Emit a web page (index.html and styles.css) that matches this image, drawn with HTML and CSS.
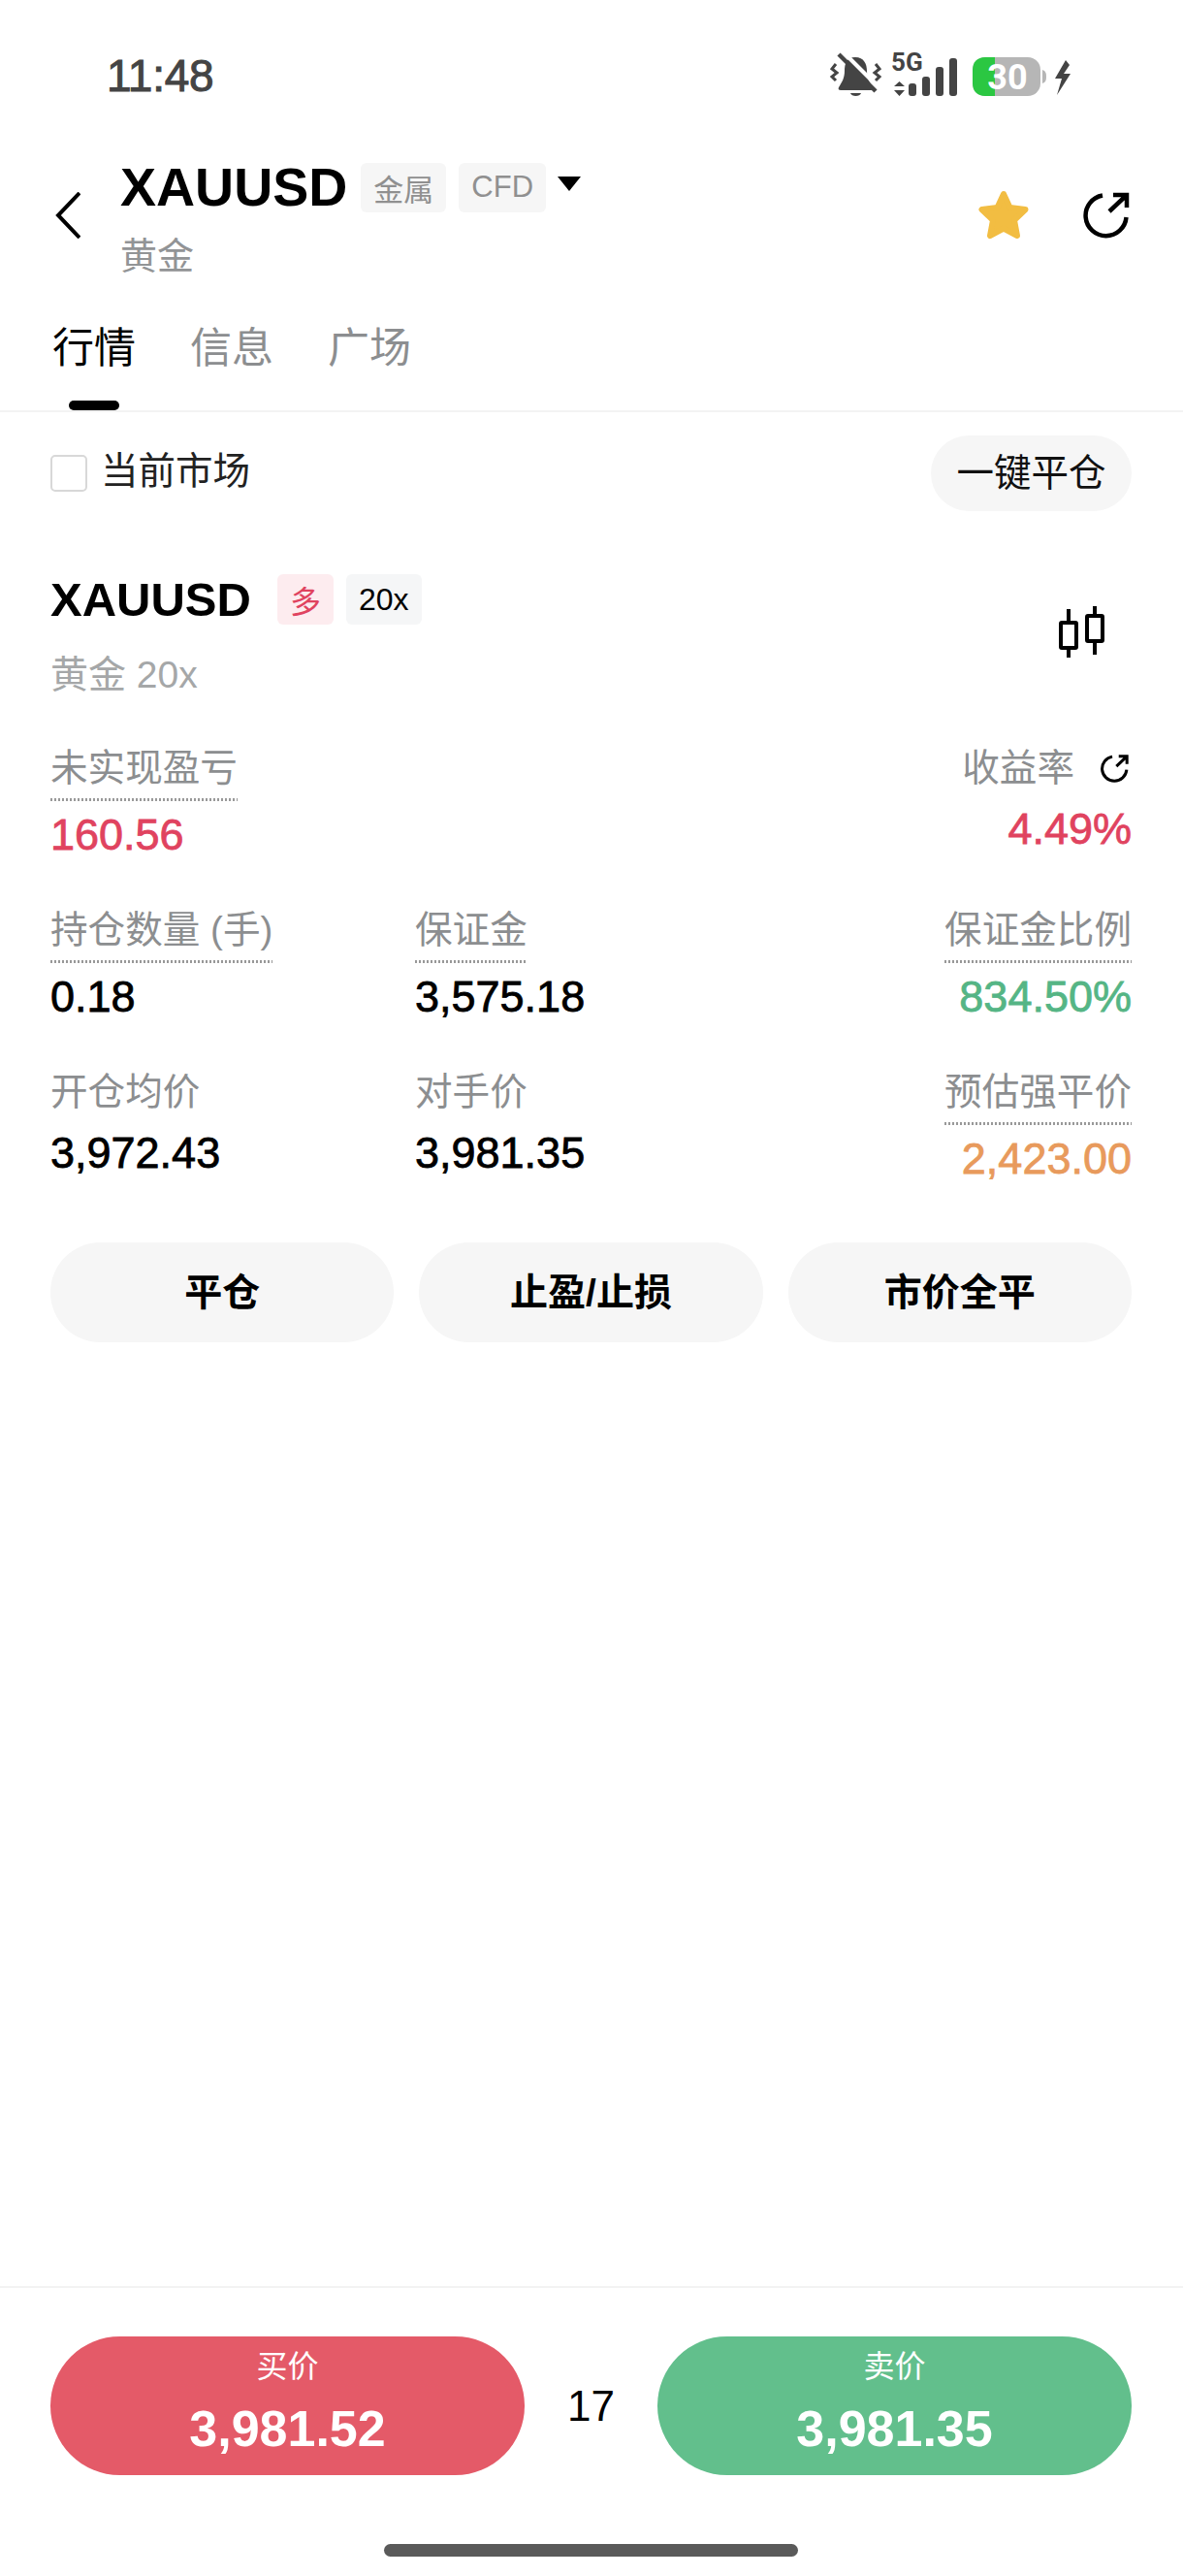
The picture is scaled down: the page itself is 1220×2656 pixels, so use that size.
FILE: index.html

```html
<!DOCTYPE html>
<html lang="zh">
<head>
  <meta charset="UTF-8">
  <title>XAUUSD</title>
  <link rel="stylesheet" href="styles.css">
</head>
<body>

<div class="status-bar">
  <span class="time">11:48</span>
  <svg class="status-icons" width="248" height="46" viewBox="0 0 248 46">
    <path d="M25 4C16 4 14 11 14 18C14 26 11 30 8 35C7 37 8 38 10 38H41C43 38 44 37 43 35C40 30 37 26 37 18C37 11 34 4 25 4Z" fill="#444"/>
    <path d="M20 41H31C30 45 21 45 20 41Z" fill="#444"/>
    <path d="M13 -1L50 36" stroke="#fff" stroke-width="4" fill="none"/>
    <path d="M8 1L46 39" stroke="#444" stroke-width="4.5" fill="none"/>
    <path d="M5 11L1 16L6 20L1 24L5 28" stroke="#444" stroke-width="3" fill="none"/>
    <path d="M46 11L50 16L45 20L50 24L46 28" stroke="#444" stroke-width="3" fill="none"/>
    <text x="62" y="18" class="icon-5g">5G</text>
    <path d="M70.500 29L76 34H65ZM70.500 44L65 38H76Z" fill="#444"/>
    <rect x="80" y="31" width="8" height="13" rx="3" fill="#444"/>
    <rect x="94" y="24" width="8" height="20" rx="3" fill="#444"/>
    <rect x="108" y="14" width="8" height="30" rx="3" fill="#444"/>
    <rect x="122" y="5" width="8" height="39" rx="3" fill="#444"/>
    <rect x="146" y="4" width="70" height="40" rx="13" fill="#b6b6b6"/>
    <path d="M159 4H169V44H159C151 44 146 39 146 31V17C146 9 151 4 159 4Z" fill="#2bc742"/>
    <path d="M218 17C221 18 222 20 222 24C222 28 221 30 218 31Z" fill="#b6b6b6"/>
    <text x="182" y="37" class="icon-batt">30</text>
    <path d="M242 7L231 26H238L233 43L247 21H240L246 12Z" fill="#444"/>
  </svg>
</div>

<div class="header">
  <svg class="back" width="26" height="48" viewBox="0 0 26 48">
    <path d="M25 1L3 24L25 47" fill="none" stroke="#000" stroke-width="4"/>
  </svg>
  <div class="title-col">
    <div class="title-row">
      <span class="title">XAUUSD</span>
      <span class="tag">金属</span>
      <span class="tag">CFD</span>
      <span class="caret"></span>
    </div>
    <div class="subtitle">黄金</div>
  </div>
  <svg class="star" width="54" height="51" viewBox="0 0 54 51">
    <path d="M27 4L33.500 18L49.500 20L38 31L41 47L27 39.500L13 47L16 31L4.500 20L20.500 18Z" fill="#f2bd42" stroke="#f2bd42" stroke-width="6" stroke-linejoin="round"/>
  </svg>
  <svg class="share" width="48" height="48" viewBox="0 0 48 48">
    <path d="M20 3.500A21 21 0 1 0 44.500 26" fill="none" stroke="#000" stroke-width="4.500"/>
    <path d="M27 20L44 4M31 3H45V16" fill="none" stroke="#000" stroke-width="4.500"/>
  </svg>
</div>

<div class="tabs">
  <div class="tab active">行情</div>
  <div class="tab">信息</div>
  <div class="tab">广场</div>
</div>

<div class="main">
  <div class="toolbar">
    <label class="check"><span class="box"></span><span class="check-text">当前市场</span></label>
    <div class="close-all">一键平仓</div>
  </div>

  <div class="pos-head">
    <div>
      <div class="pos-title">
        <span class="pos-name">XAUUSD</span>
        <span class="pos-tag long">多</span>
        <span class="pos-tag">20x</span>
      </div>
      <div class="pos-sub">黄金 20x</div>
    </div>
    <svg class="candle" width="48" height="53" viewBox="0 0 48 53">
      <path d="M10 3V17M10 43V53M37 0V10M37 36V50" stroke="#000" stroke-width="4" fill="none"/>
      <rect x="2" y="17" width="16" height="26" rx="1" fill="none" stroke="#000" stroke-width="4"/>
      <rect x="29" y="10" width="16" height="26" rx="1" fill="none" stroke="#000" stroke-width="4"/>
    </svg>
  </div>

  <div class="metrics">
    <div class="cell">
      <span class="label dotted">未实现盈亏</span>
      <span class="value red">160.56</span>
    </div>
    <div class="cell"></div>
    <div class="cell right">
      <span class="label">收益率<svg class="share-small" width="29" height="29" viewBox="0 0 48 48">
          <path d="M20 3.500A21 21 0 1 0 44.500 26" fill="none" stroke="#000" stroke-width="5"/>
          <path d="M27 20L44 4M31 3H45V16" fill="none" stroke="#000" stroke-width="5"/>
        </svg></span>
      <span class="value red">4.49%</span>
    </div>

    <div class="cell">
      <span class="label dotted">持仓数量 (手)</span>
      <span class="value">0.18</span>
    </div>
    <div class="cell">
      <span class="label dotted">保证金</span>
      <span class="value">3,575.18</span>
    </div>
    <div class="cell right">
      <span class="label dotted">保证金比例</span>
      <span class="value green">834.50%</span>
    </div>

    <div class="cell">
      <span class="label">开仓均价</span>
      <span class="value">3,972.43</span>
    </div>
    <div class="cell">
      <span class="label">对手价</span>
      <span class="value">3,981.35</span>
    </div>
    <div class="cell right">
      <span class="label dotted">预估强平价</span>
      <span class="value orange">2,423.00</span>
    </div>
  </div>

  <div class="actions">
    <div class="action">平仓</div>
    <div class="action">止盈/止损</div>
    <div class="action">市价全平</div>
  </div>
</div>

<div class="trade">
  <div class="trade-btn buy">
    <div class="trade-label">买价</div>
    <div class="trade-price">3,981.52</div>
  </div>
  <div class="spread">17</div>
  <div class="trade-btn sell">
    <div class="trade-label">卖价</div>
    <div class="trade-price">3,981.35</div>
  </div>
</div>
<div class="home-wrap"><div class="home-bar"></div></div>

</body>
</html>
```

FILE: styles.css

```css
* {
  box-sizing: border-box;
}
body {
  margin: 0;
  width: 1220px;
  height: 2656px;
  display: flex;
  flex-direction: column;
  background: #fff;
  color: #000;
  font-family: "Liberation Sans", "Noto Sans CJK SC", sans-serif;
}

/* status bar */
.status-bar {
  height: 156px;
  padding: 0 115px 0 110px;
  display: flex;
  justify-content: space-between;
  align-items: center;
}
.time {
  font-size: 46px;
  letter-spacing: -0.3px;
  color: #444;
  -webkit-text-stroke: 1px #444;
}
.status-icons {
  overflow: visible;
}
.icon-5g {
  font-family: Roboto, sans-serif;
  font-weight: 700;
  font-size: 26px;
  fill: #444;
}
.icon-batt {
  font-family: Roboto, sans-serif;
  font-weight: 700;
  font-size: 36px;
  fill: #fff;
  text-anchor: middle;
}

/* header */
.header {
  height: 134px;
  margin-top: 3px;
  padding: 0 55px 0 57px;
  display: flex;
  align-items: center;
}
.back {
  margin-right: 41px;
  margin-bottom: 8px;
}
.title-col {
  flex: 1;
}
.title-row {
  height: 60px;
  display: flex;
  align-items: center;
}
.title {
  font-weight: 700;
  font-size: 55.500px;
  margin-right: 14px;
}
.tag {
  height: 51px;
  padding: 0 13px;
  margin-right: 13px;
  display: flex;
  align-items: center;
  background: #f6f6f6;
  border-radius: 6px;
  color: #909090;
  font-size: 31px;
}
.caret {
  width: 0;
  height: 0;
  margin-left: -1px;
  margin-bottom: 8px;
  border-left: 12px solid transparent;
  border-right: 12px solid transparent;
  border-top: 15px solid #000;
}
.subtitle {
  margin-top: 16px;
  line-height: 50px;
  font-size: 38px;
  color: #929496;
}
.star {
  margin-right: 55px;
  margin-bottom: 10px;
}
.share {
  margin-bottom: 8px;
}

/* tabs */
.tabs {
  height: 132px;
  padding: 35px 0 0 54px;
  display: flex;
  gap: 56px;
  border-bottom: 2px solid #f3f3f3;
}
.tab {
  position: relative;
  height: 95px;
  line-height: 62px;
  font-size: 43px;
  color: #8c8e90;
}
.tab.active {
  color: #000;
}
.tab.active::after {
  content: "";
  position: absolute;
  left: 17px;
  bottom: 0;
  width: 52px;
  height: 10px;
  border-radius: 5px;
  background: #000;
}

/* position */
.main {
  flex: 1;
  padding: 24px 53px 0 52px;
}
.toolbar {
  height: 78px;
  display: flex;
  justify-content: space-between;
  align-items: center;
}
.check {
  display: flex;
  align-items: center;
  gap: 14px;
  font-size: 38.500px;
  color: #222;
}
.check-text {
  line-height: 38px;
  margin-top: -4px;
}
.box {
  width: 38px;
  height: 38px;
  border: 2px solid #d8d8d8;
  border-radius: 5px;
}
.close-all {
  width: 207px;
  height: 78px;
  line-height: 78px;
  text-align: center;
  background: #f6f6f6;
  border-radius: 39px;
  font-size: 38.500px;
  color: #111;
}
.pos-head {
  margin-top: 65px;
  padding-right: 27px;
  display: flex;
  justify-content: space-between;
  align-items: center;
}
.pos-title {
  height: 52px;
  display: flex;
  align-items: center;
}
.pos-name {
  font-weight: 700;
  font-size: 49px;
  margin-right: 27px;
}
.pos-tag {
  height: 52px;
  padding: 0 13px;
  margin-right: 13px;
  display: flex;
  align-items: center;
  background: #f5f6f7;
  border-radius: 6px;
  font-size: 32px;
}
.pos-tag.long {
  background: #fdecef;
  color: #e0435f;
}
.pos-sub {
  margin-top: 27px;
  line-height: 50px;
  font-size: 39px;
  color: #a5a7a8;
}
.candle {
  margin-bottom: 10px;
}

.metrics {
  margin-top: 45px;
  display: grid;
  grid-template-columns: 376px 1fr auto;
  grid-auto-rows: 121px;
  row-gap: 46px;
}
.cell {
  display: flex;
  flex-direction: column;
  align-items: flex-start;
}
.cell.right {
  align-items: flex-end;
}
.label {
  display: flex;
  align-items: center;
  padding-top: 2px;
  line-height: 48px;
  margin-bottom: 13px;
  font-size: 38.600px;
  color: #8c8e90;
  white-space: nowrap;
}
.label.dotted {
  padding-bottom: 10px;
  margin-bottom: 9px;
  background: linear-gradient(90deg, #999 50%, transparent 50%) left bottom / 4px 3px repeat-x;
}
.share-small {
  margin-left: 27px;
  margin-right: 3px;
}
.value {
  line-height: 52px;
  font-size: 45px;
  -webkit-text-stroke: 0.8px currentColor;
}
.value.red {
  color: #e0435f;
}
.value.green {
  color: #55b585;
}
.value.orange {
  color: #e89a5c;
}

.actions {
  margin-top: 60px;
  display: grid;
  grid-template-columns: repeat(3, 1fr);
  gap: 26px;
}
.action {
  height: 103px;
  line-height: 103px;
  text-align: center;
  background: #f6f6f6;
  border-radius: 52px;
  font-weight: 700;
  font-size: 39px;
}

/* bottom */
.trade {
  padding: 50px 53px 0 52px;
  display: flex;
  align-items: center;
  border-top: 2px solid #f3f3f3;
}
.trade-btn {
  flex: 1;
  height: 143px;
  padding-top: 12px;
  border-radius: 72px;
  text-align: center;
  color: #fff;
}
.buy {
  background: #e45a68;
}
.sell {
  background: #62bf8c;
}
.trade-label {
  line-height: 38px;
  font-size: 32px;
}
.trade-price {
  margin-top: 15px;
  line-height: 60px;
  font-weight: 700;
  font-size: 52px;
}
.spread {
  width: 137px;
  text-align: center;
  font-size: 44px;
}
.home-wrap {
  height: 104px;
  padding-top: 71px;
}
.home-bar {
  width: 427px;
  height: 13px;
  margin-left: 396px;
  border-radius: 7px;
  background: #5a5a5a;
}
```
